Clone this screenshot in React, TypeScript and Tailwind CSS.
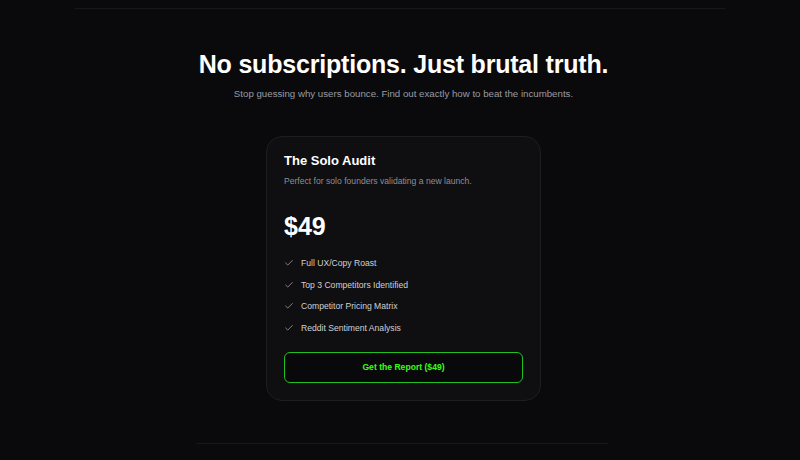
import React from "react";

const features = [
  "Full UX/Copy Roast",
  "Top 3 Competitors Identified",
  "Competitor Pricing Matrix",
  "Reddit Sentiment Analysis",
];

function Check() {
  return (
    <svg width="10" height="10" viewBox="0 0 24 24" fill="none" stroke="#8b8b93" strokeWidth="2.2" strokeLinecap="round" strokeLinejoin="round">
      <path d="M20 6 9 17l-5-5" />
    </svg>
  );
}

export default function App() {
  return (
    <div
      className="w-[800px] h-[460px] bg-[#0a0a0c] overflow-hidden flex flex-col items-center"
      style={{ fontFamily: '"Liberation Sans", Arial, sans-serif' }}
    >
      <div className="mt-[8px] w-[650px] h-px bg-[#18181b]" />
      <div className="ml-[7px] flex flex-col items-center">
        <h1 className="mt-[40px] text-[25px] leading-[30px] font-bold text-white tracking-[-0.2px]">
          No subscriptions. Just brutal truth.
        </h1>
        <p className="mt-[9px] text-[9.7px] leading-[12px] text-[#9a9aa3]">
          Stop guessing why users bounce. Find out exactly how to beat the incumbents.
        </p>
        <div className="mt-[36px] w-[275px] h-[265px] rounded-[16px] bg-[#0f0f11] border border-[#1e1e22] px-[17px] pt-[15px]">
          <h2 className="text-[13px] leading-[18px] font-bold text-white">The Solo Audit</h2>
          <p className="mt-[5px] text-[8.6px] leading-[12px] text-[#8e8e96]">
            Perfect for solo founders validating a new launch.
          </p>
          <div className="mt-[24px] text-[25px] leading-[30px] font-bold text-white">$49</div>
          <ul className="mt-[16px] flex flex-col gap-[9.67px]">
            {features.map((f) => (
              <li key={f} className="flex items-center gap-[7px] h-[12px]">
                <Check />
                <span className="text-[8.6px] leading-[12px] text-[#cfcfd4]">{f}</span>
              </li>
            ))}
          </ul>
          <button className="mt-[18px] w-full h-[31px] rounded-[6px] border-[1.5px] border-[#20c020] bg-[#09090b] text-[#39ff14] text-[8.6px] font-bold">
            Get the Report ($49)
          </button>
        </div>
      </div>
      <div className="ml-[4px] mt-[42px] w-[412px] h-px bg-[#18181b]" />
    </div>
  );
}
